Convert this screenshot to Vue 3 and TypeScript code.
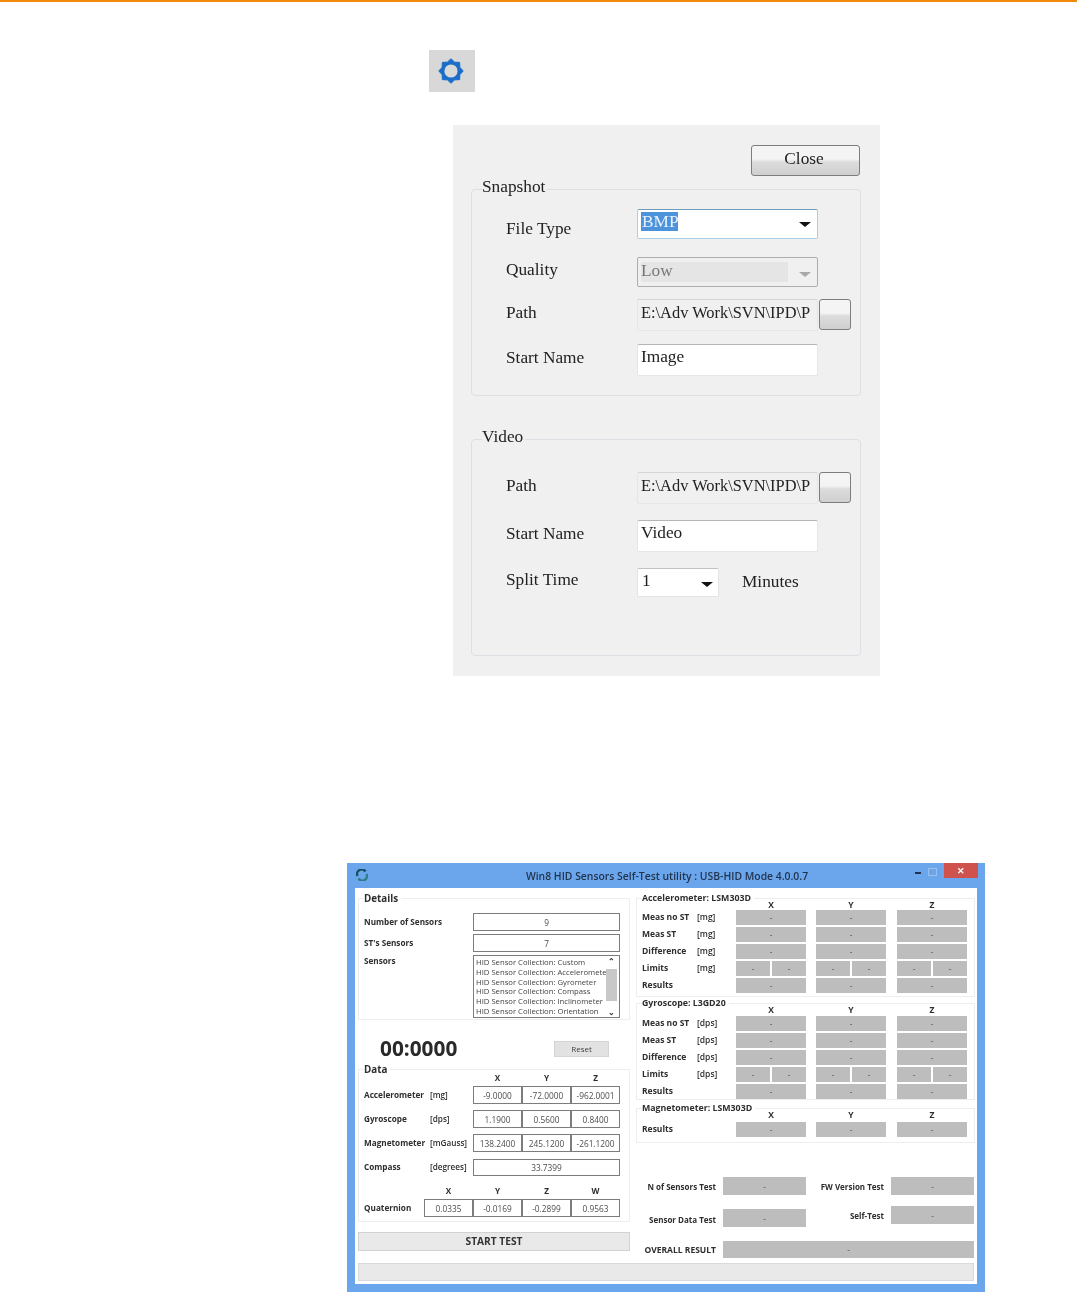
<script setup lang="ts">
interface TriRow { label: string; unit: string; limits?: boolean }
interface SensorGroup { title: string; rows: TriRow[]; kind: string }

const gearPoints = Array.from({ length: 16 }, (_, i) => {
  const r = i % 2 === 0 ? 12.2 : 9.6
  const a = (i * Math.PI) / 8 - Math.PI / 2
  return `${(14 + r * Math.cos(a)).toFixed(2)},${(14 + r * Math.sin(a)).toFixed(2)}`
}).join(' ')

const makeRows = (unit: string): TriRow[] => [
  { label: 'Meas no ST', unit },
  { label: 'Meas ST', unit },
  { label: 'Difference', unit },
  { label: 'Limits', unit, limits: true },
  { label: 'Results', unit: '' },
]

const sensorGroups: SensorGroup[] = [
  { title: 'Accelerometer: LSM303D', rows: makeRows('[mg]'), kind: 'accel' },
  { title: 'Gyroscope: L3GD20', rows: makeRows('[dps]'), kind: 'gyro' },
  { title: 'Magnetometer: LSM303D', rows: [{ label: 'Results', unit: '' }], kind: 'mag' },
]

const sensorList = [
  'HID Sensor Collection: Custom',
  'HID Sensor Collection: Accelerometer',
  'HID Sensor Collection: Gyrometer',
  'HID Sensor Collection: Compass',
  'HID Sensor Collection: Inclinometer',
  'HID Sensor Collection: Orientation',
]

const dataRows = [
  { label: 'Accelerometer', unit: '[mg]', values: ['-9.0000', '-72.0000', '-962.0001'] },
  { label: 'Gyroscope', unit: '[dps]', values: ['1.1900', '0.5600', '0.8400'] },
  { label: 'Magnetometer', unit: '[mGauss]', values: ['138.2400', '245.1200', '-261.1200'] },
]

const quaternion = ['0.0335', '-0.0169', '-0.2899', '0.9563']
</script>

<template>
  <div class="page">
    <div class="accent"></div>

    <div class="gear-box">
      <svg width="28" height="28" viewBox="0 0 28 28">
        <polygon :points="gearPoints" fill="#1a6dc8" stroke="#1a6dc8" stroke-width="1" stroke-linejoin="round" />
        <circle cx="14" cy="14" r="6.600" fill="#d8d8d8" />
      </svg>
    </div>

    <section class="dialog">
      <div class="close-row"><button class="win-btn close-btn">Close</button></div>

      <div class="group snapshot">
        <span class="legend">Snapshot</span>
        <div class="form-row row-file">
          <span class="label drop">File Type</span>
          <div class="combo focused"><span class="selected">BMP</span><i class="arrow"></i></div>
        </div>
        <div class="form-row row-quality">
          <span class="label">Quality</span>
          <div class="combo disabled"><span class="combo-inner">Low</span><i class="arrow grey"></i></div>
        </div>
        <div class="form-row row-path">
          <span class="label">Path</span>
          <div class="field readonly">E:\Adv Work\SVN\IPD\P</div>
          <button class="win-btn browse"></button>
        </div>
        <div class="form-row row-name">
          <span class="label">Start Name</span>
          <div class="field">Image</div>
        </div>
      </div>

      <div class="group video">
        <span class="legend">Video</span>
        <div class="form-row row-path">
          <span class="label">Path</span>
          <div class="field readonly">E:\Adv Work\SVN\IPD\P</div>
          <button class="win-btn browse"></button>
        </div>
        <div class="form-row row-vname">
          <span class="label">Start Name</span>
          <div class="field">Video</div>
        </div>
        <div class="form-row row-split">
          <span class="label">Split Time</span>
          <div class="combo short">1<i class="arrow"></i></div>
          <span class="minutes">Minutes</span>
        </div>
      </div>
    </section>

    <section class="window">
      <header class="titlebar">
        <svg class="app-icon" width="12" height="12" viewBox="0 0 12 12">
          <path d="M1.500 7A4.600 4.600 0 0 1 9.500 2.500" fill="none" stroke="#174f63" stroke-width="2.400" />
          <path d="M10.500 5A4.600 4.600 0 0 1 2.500 9.500" fill="none" stroke="#2c7f86" stroke-width="2.400" />
        </svg>
        <span class="title">Win8 HID Sensors Self-Test utility : USB-HID Mode 4.0.0.7</span>
        <span class="win-min"></span>
        <span class="win-max"></span>
        <span class="win-close">✕</span>
      </header>

      <div class="client">
        <div class="columns">
          <div class="left">
            <div class="tgroup details">
              <span class="tlegend big">Details</span>
              <div class="detail-row"><b>Number of Sensors</b><span class="tbox">9</span></div>
              <div class="detail-row"><b>ST's Sensors</b><span class="tbox">7</span></div>
              <div class="detail-row list-row">
                <b>Sensors</b>
                <div class="listbox">
                  <div class="list-items"><div v-for="s in sensorList" :key="s">{{ s }}</div></div>
                  <div class="scroll">
                    <span class="chev">⌃</span>
                    <span class="thumb"></span>
                    <span class="chev">⌄</span>
                  </div>
                </div>
              </div>
            </div>

            <div class="timer-row">
              <span class="timer">00:0000</span>
              <span class="reset">Reset</span>
            </div>

            <div class="tgroup data">
              <span class="tlegend big">Data</span>
              <div class="data-row head"><span></span><span></span><b>X</b><b>Y</b><b>Z</b></div>
              <div v-for="r in dataRows" :key="r.label" class="data-row">
                <b>{{ r.label }}</b><b class="unit">{{ r.unit }}</b>
                <span v-for="v in r.values" :key="v" class="tbox">{{ v }}</span>
              </div>
              <div class="data-row compass">
                <b>Compass</b><b class="unit">[degrees]</b>
                <span class="tbox wide">33.7399</span>
              </div>
              <div class="quat-row head"><span></span><b>X</b><b>Y</b><b>Z</b><b>W</b></div>
              <div class="quat-row">
                <b>Quaternion</b>
                <span v-for="q in quaternion" :key="q" class="tbox">{{ q }}</span>
              </div>
            </div>

            <div class="start">START TEST</div>
          </div>

          <div class="right">
            <div
              v-for="g in sensorGroups"
              :key="g.title"
              class="tgroup sensor"
              :class="g.kind"
            >
              <span class="tlegend">{{ g.title }}</span>
              <div class="tri head"><span></span><span></span><b>X</b><b>Y</b><b>Z</b></div>
              <div v-for="r in g.rows" :key="r.label" class="tri">
                <b>{{ r.label }}</b><b class="unit">{{ r.unit }}</b>
                <template v-for="c in 3" :key="c">
                  <div v-if="r.limits" class="cell split"><span class="gbox">-</span><span class="gbox">-</span></div>
                  <div v-else class="cell"><span class="gbox">-</span></div>
                </template>
              </div>
            </div>

            <div class="tests">
              <b class="tlabel">N of Sensors Test</b><span class="gbox">-</span>
              <b class="tlabel">FW Version Test</b><span class="gbox">-</span>
            </div>
            <div class="tests second">
              <b class="tlabel low">Sensor Data Test</b><span class="gbox low-box">-</span>
              <b class="tlabel">Self-Test</b><span class="gbox">-</span>
            </div>
            <div class="tests overall">
              <b class="tlabel strong">OVERALL RESULT</b><span class="gbox">-</span>
            </div>
          </div>
        </div>
        <div class="status"></div>
      </div>
    </section>
  </div>
</template>

<style>
html, body { margin: 0; background: #fff; }
</style>

<style scoped>
.page { width: 1077px; height: 1294px; overflow: hidden; background: #fff; }
.accent { height: 2px; background: #f28b0c; }

.gear-box {
  width: 46px; height: 42px; margin: 48px 0 0 429px; box-sizing: border-box; padding-right: 2px;
  background: #d8d8d8; display: flex; align-items: center; justify-content: center;
}

.dialog {
  width: 427px; height: 551px; margin: 33px 0 0 453px; box-sizing: border-box;
  padding: 20px 19px 0 18px; background: #f0f0f0;
  font: 17.300px "Liberation Serif", serif; color: #222; filter: blur(.35px);
}
.close-row { display: flex; justify-content: flex-end; padding-right: 1px; }
.win-btn {
  display: block; padding: 0; box-sizing: border-box; border: 1px solid #7d7d7d; border-radius: 3px;
  background: linear-gradient(#f4f4f4 0 45%, #dcdcdc 55%, #cfcfcf);
  font: inherit; color: #222;
}
.close-btn { width: 109px; height: 31px; padding-bottom: 3px; padding-right: 3px; }
.group { position: relative; box-sizing: border-box; border: 1px solid #dcdfe3; border-radius: 4px; }
.snapshot { height: 207px; margin-top: 13px; padding-top: 19px; }
.video { height: 217px; margin-top: 43px; padding-top: 32px; }
.legend {
  position: absolute; left: 10px; top: -13px; padding-right: 2px; background: #f0f0f0; line-height: 20px;
}
.form-row { display: grid; grid-template-columns: 131px 181px auto; align-items: center; padding-left: 34px; }
.row-file { height: 29px; }
.row-quality { height: 30px; margin-top: 19px; }
.row-path { height: 32px; margin-top: 12px; }
.row-name { height: 32px; margin-top: 13px; }
.video .row-path { margin-top: 0; }
.row-vname { height: 32px; margin-top: 16px; }
.row-split { height: 29px; margin-top: 16px; grid-template-columns: 131px 82px auto; }
.label { margin-bottom: 5px; white-space: nowrap; }
.label.drop { margin: 10px 0 0; }
.combo {
  position: relative; box-sizing: border-box; height: 100%; background: #fff; padding: 0 0 4px 3px;
  display: flex; align-items: center; border: 1px solid #e2e5e7; border-top-color: #c2c2c2; border-radius: 2px;
}
.combo.focused { border: 1px solid #a9cfe8; border-top-color: #6f9dbb; padding-bottom: 5px; }
.selected { background: #4c93dc; color: #e9f2fb; line-height: 19px; padding: 0 0 0 1px; width: 37px; box-sizing: border-box; }
.combo.disabled { background: #f0f0f0; border: 1px solid #adadad; color: #777; padding: 4px 29px 4px 3px; }
.combo-inner { flex: 1; background: #e5e5e5; align-self: stretch; line-height: 17px; }
.combo.short { padding-left: 4px; }
.minutes { margin-left: 23px; margin-bottom: 1px; }
.arrow {
  position: absolute; right: 6px; top: 50%; margin-top: -2px;
  border: 5px solid transparent; border-bottom: 0; border-top: 5px solid #111; border-left-width: 6px; border-right-width: 6px;
}
.combo.short .arrow { right: 5px; margin-top: -1px; }
.arrow.grey { border-top-color: #a8a8a8; margin-top: 0; }
.field {
  box-sizing: border-box; height: 32px; background: #fff; padding: 0 0 6px 3px; overflow: hidden;
  display: flex; align-items: center; white-space: nowrap; border: 1px solid #e4e6e8; border-top-color: #b5b5b5;
  border-radius: 2px;
}
.field.readonly { background: #f0f0f0; border-top-color: #d5d5d5; font-size: 16.400px; padding-bottom: 4px; }
.browse { width: 32px; height: 31px; margin: 0 0 1px 1px; }

.window {
  width: 638px; height: 429px; margin: 187px 0 0 347px; box-sizing: border-box;
  padding: 0 8px 8px; background: #6ba6ec; font-family: "Open Sans", "Liberation Sans", sans-serif;
  font-size: 8.500px; color: #333; filter: blur(.4px);
}
.titlebar { position: relative; height: 25px; display: flex; align-items: center; justify-content: center; }
.app-icon { position: absolute; left: 1px; top: 6px; }
.title { font-size: 10.400px; font-weight: 600; color: #22344d; margin-left: 2px; white-space: nowrap; }
.win-min { position: absolute; right: 56px; top: 9px; width: 6px; height: 2px; background: #22344d; }
.win-max { position: absolute; right: 40px; top: 5px; width: 7px; height: 6px; border: 1px solid #9cc0ee; }
.win-close {
  position: absolute; right: -1px; top: 0; width: 34px; height: 15px; background: #d0524d; color: #fff;
  font-size: 9px; font-weight: 700; line-height: 15px; text-align: center;
}
.client { height: 396px; box-sizing: border-box; padding: 10px 2px 0 3px; background: #fff; }
.columns { display: grid; grid-template-columns: 272px 339px; column-gap: 6px; height: 360px; }
.tgroup { position: relative; box-sizing: border-box; border: 1px solid #eeeeee; }
.tlegend {
  position: absolute; left: 5px; top: -7px; padding-right: 3px; background: #fff;
  font-size: 8.800px; font-weight: 700; line-height: 12px; white-space: nowrap; color: #2e2e2e;
}
.tlegend.big { font-size: 9.800px; top: -6px; }
b { font-weight: 700; white-space: nowrap; color: #2e2e2e; padding-bottom: 2px; }
.left b { font-size: 8.200px; }
.unit { font-weight: 600; }
.tbox {
  box-sizing: border-box; display: flex; align-items: center; justify-content: center; height: 18px;
  border: 1px solid #7c7c7c; background: #fff; color: #4d4d4d; font-size: 8.300px; white-space: nowrap;
}
.details { height: 122px; padding: 14px 0 0 5px; }
.detail-row { display: grid; grid-template-columns: 109px 147px; align-items: center; margin-bottom: 3px; }
.list-row { align-items: start; }
.listbox { display: flex; height: 63px; box-sizing: border-box; border: 1px solid #7c7c7c; overflow: hidden; }
.list-items { width: 132px; flex: none; overflow: hidden; padding: 2px 0 0 2px; box-sizing: border-box; color: #444; font-size: 7.700px; line-height: 9.800px; white-space: nowrap; }
.scroll { flex: 1; display: flex; flex-direction: column; align-items: center; padding-right: 2px; background: #fff; }
.chev { height: 8px; line-height: 9px; font-size: 8px; font-weight: 700; color: #333; }
.thumb { width: 100%; height: 32px; margin: 5px 0 6px; background: #c8c8c8; }
.timer-row { height: 47px; display: flex; align-items: center; padding-left: 22px; }
.timer { width: 174px; font-size: 20.800px; font-weight: 700; color: #2a2a2a; margin-top: 8px; }
.reset { width: 55px; height: 16px; margin-top: 10px; background: #e2e2e2; border: 1px solid #d4d4d4; box-sizing: border-box; display: flex; align-items: center; justify-content: center; color: #444; font-size: 8px; }
.data { height: 153px; margin-top: 2px; padding-left: 5px; }
.data-row { display: grid; grid-template-columns: 66px 43px 49px 49px 49px; align-items: center; height: 18px; margin-bottom: 6px; }
.data-row.head, .quat-row.head { height: 16px; margin: 0; text-align: center; }
.data-row:nth-of-type(4) { margin-bottom: 7px; }
.data-row:nth-of-type(5) { margin-bottom: 7px; }
.compass { height: 17px; margin-bottom: 6px; }
.wide { grid-column: 3 / 6; height: 17px; }
.quat-row { display: grid; grid-template-columns: 60px 49px 49px 49px 49px; align-items: center; }
.start {
  height: 19px; margin-top: 10px; box-sizing: border-box; background: #e9e9e9; border: 1px solid #d2d2d2; padding-bottom: 2px;
  display: flex; align-items: center; justify-content: center; font-weight: 700; color: #333; font-size: 10.200px;
}
.sensor { padding-left: 5px; }
.sensor + .sensor { margin-top: 6px; }
.accel { height: 99px; }
.gyro { height: 97px; }
.mag { height: 35px; margin-top: 8px !important; }
.tri { display: grid; grid-template-columns: 55px 39px 70px 80px 81px; align-items: center; height: 15px; margin-bottom: 2px; }
.tri.head { height: 11px; margin: 0; text-align: center; font-size: 8.500px; }
.gyro .tri.head { height: 12px; }
.mag .tri.head { height: 13px; }
.tri.head b:nth-child(4) { padding-left: 10px; }
.tri.head b:nth-child(5) { padding-left: 11px; }
.cell { height: 15px; display: flex; }
.cell:nth-of-type(n) { justify-self: end; width: 70px; }
.split { gap: 2px; }
.split .gbox { flex: 1; }
.gbox {
  flex: 1; display: flex; align-items: center; justify-content: center; background: #bdbdbd; color: #555; font-size: 8.500px;
}
.tests { display: grid; grid-template-columns: 87px 83px 85px 83px; align-items: center; height: 18px; margin-top: 34px; }
.tests .gbox { height: 100%; }
.tlabel { text-align: right; padding-right: 7px; padding-bottom: 0; font-weight: 700; font-size: 8px; }
.second { height: 21px; margin-top: 11px; align-items: start; }
.second .tlabel { padding-top: 4px; }
.second .tlabel.low { padding-top: 8px; }
.second .gbox { height: 18px; }
.second .low-box { margin-top: 3px; }
.overall { height: 17px; margin-top: 14px; grid-template-columns: 87px 251px; }
.tlabel.strong { font-weight: 700; font-size: 8.500px; }
.status { height: 18px; margin: 5px 1px 0 0; background: #e9e9e9; border: 1px solid #dadada; box-sizing: border-box; }
</style>
